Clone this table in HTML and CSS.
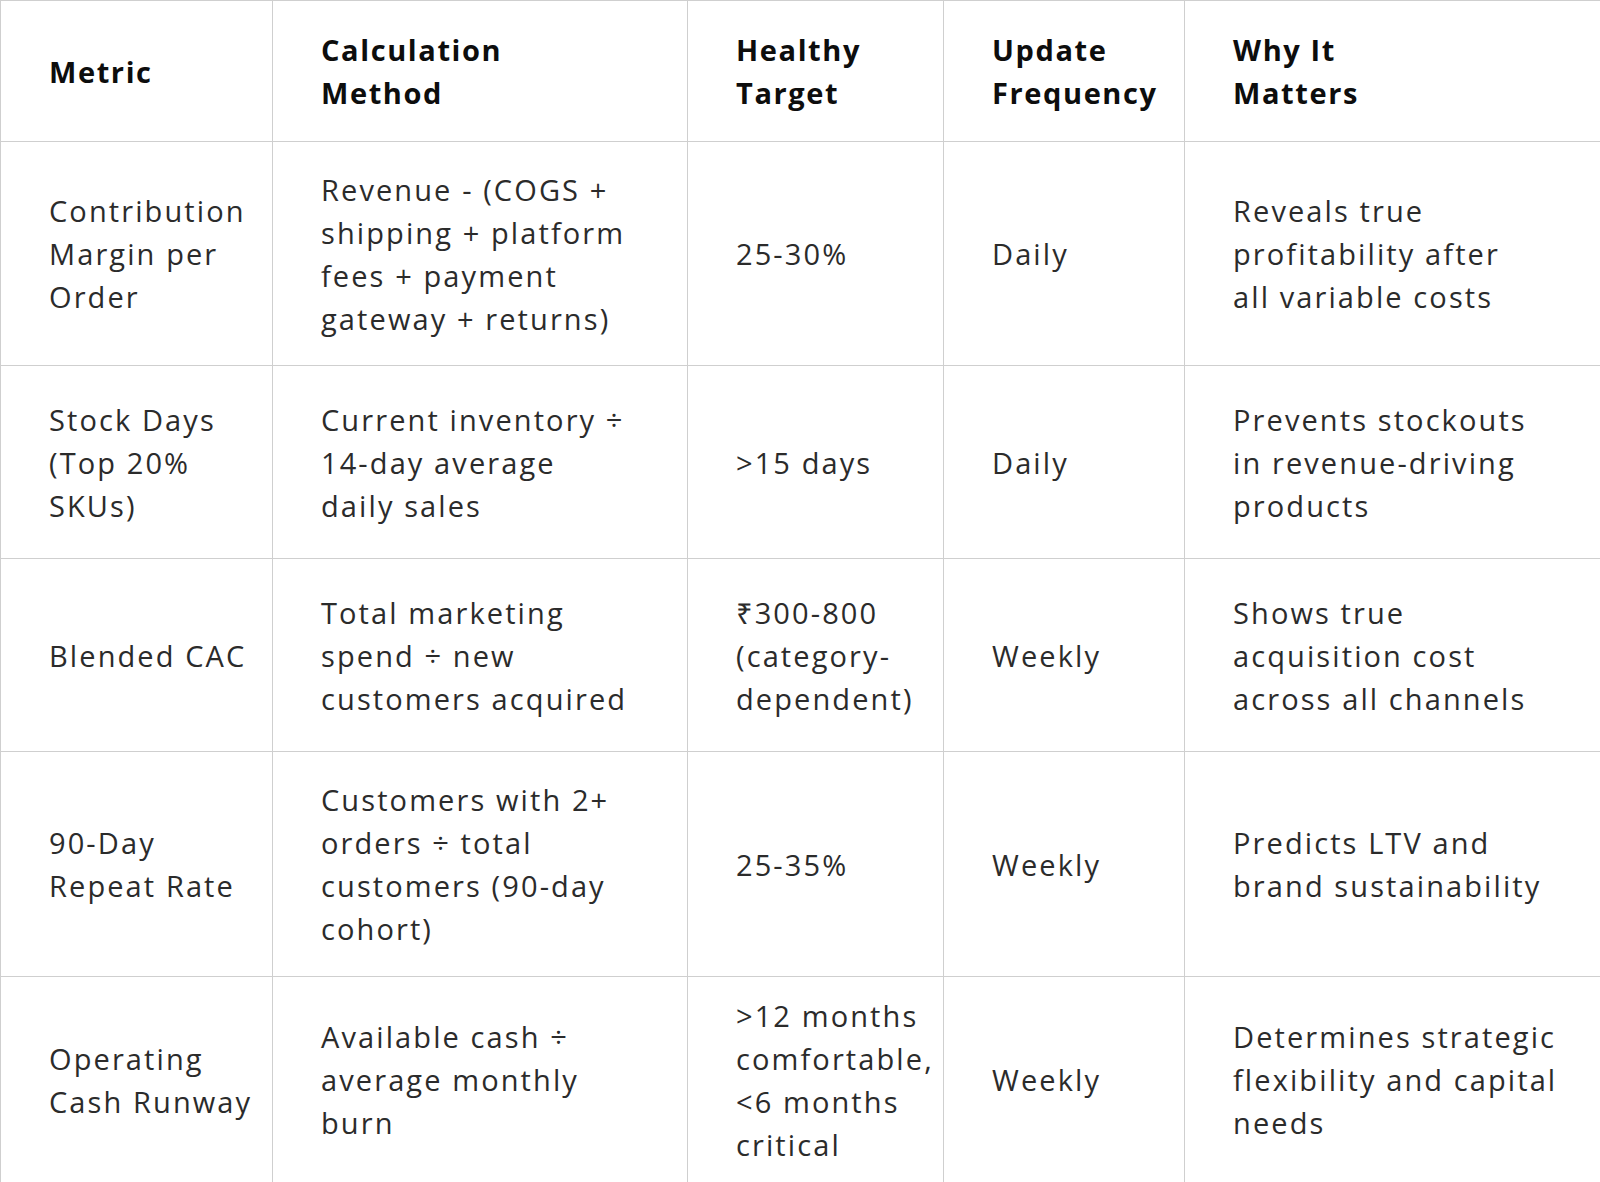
FILE: index.html
```html
<!DOCTYPE html>
<html lang="en">
<head>
<meta charset="utf-8">
<title>Metrics</title>
<link rel="stylesheet" href="styles.css">
</head>
<body>
<table class="metrics">
  <colgroup>
    <col class="c-metric">
    <col class="c-calc">
    <col class="c-target">
    <col class="c-freq">
    <col class="c-why">
  </colgroup>
  <thead>
    <tr class="row-head">
      <th>Metric</th>
      <th>Calculation<br>Method</th>
      <th>Healthy<br>Target</th>
      <th>Update<br>Frequency</th>
      <th>Why It<br>Matters</th>
    </tr>
  </thead>
  <tbody>
    <tr class="row-1">
      <td>Contribution<br>Margin per<br>Order</td>
      <td>Revenue - (COGS +<br>shipping + platform<br>fees + payment<br>gateway + returns)</td>
      <td>25-30%</td>
      <td>Daily</td>
      <td>Reveals true<br>profitability after<br>all variable costs</td>
    </tr>
    <tr class="row-2">
      <td>Stock Days<br>(Top 20%<br>SKUs)</td>
      <td>Current inventory ÷<br>14-day average<br>daily sales</td>
      <td>&gt;15 days</td>
      <td>Daily</td>
      <td>Prevents stockouts<br>in revenue-driving<br>products</td>
    </tr>
    <tr class="row-3">
      <td>Blended CAC</td>
      <td>Total marketing<br>spend ÷ new<br>customers acquired</td>
      <td>₹300-800<br>(category-<br>dependent)</td>
      <td>Weekly</td>
      <td>Shows true<br>acquisition cost<br>across all channels</td>
    </tr>
    <tr class="row-4">
      <td>90-Day<br>Repeat Rate</td>
      <td>Customers with 2+<br>orders ÷ total<br>customers (90-day<br>cohort)</td>
      <td>25-35%</td>
      <td>Weekly</td>
      <td>Predicts LTV and<br>brand sustainability</td>
    </tr>
    <tr class="row-5">
      <td>Operating<br>Cash Runway</td>
      <td>Available cash ÷<br>average monthly<br>burn</td>
      <td>&gt;12 months<br>comfortable,<br>&lt;6 months<br>critical</td>
      <td>Weekly</td>
      <td>Determines strategic<br>flexibility and capital<br>needs</td>
    </tr>
  </tbody>
</table>
</body>
</html>
```
FILE: styles.css
```css
html, body {
  margin: 0;
  padding: 0;
  background: #ffffff;
}

.metrics {
  width: 1600px;
  table-layout: fixed;
  border-collapse: collapse;
  font-family: "Open Sans", "Noto Sans", sans-serif;
  font-size: 29px;
  line-height: 43px;
  letter-spacing: 2.1px;
  color: #2b2b2b;
  border: 1px solid #a9a9a9;
}

.c-metric { width: 272px; }
.c-calc { width: 415px; }
.c-target { width: 256px; }
.c-freq { width: 241px; }
.c-why { width: 416px; }

.metrics th,
.metrics td {
  border: 1px solid #cfcfcf;
  padding: 0 2px 0 48px;
  text-align: left;
  vertical-align: middle;
  white-space: nowrap;
}

.metrics th {
  font-weight: 700;
  letter-spacing: 1.6px;
  color: #0d0d0d;
}

.row-head { height: 141px; }
.row-1 { height: 224px; }
.row-2 { height: 193px; }
.row-3 { height: 193px; }
.row-4 { height: 225px; }
.row-5 { height: 206px; }
```
